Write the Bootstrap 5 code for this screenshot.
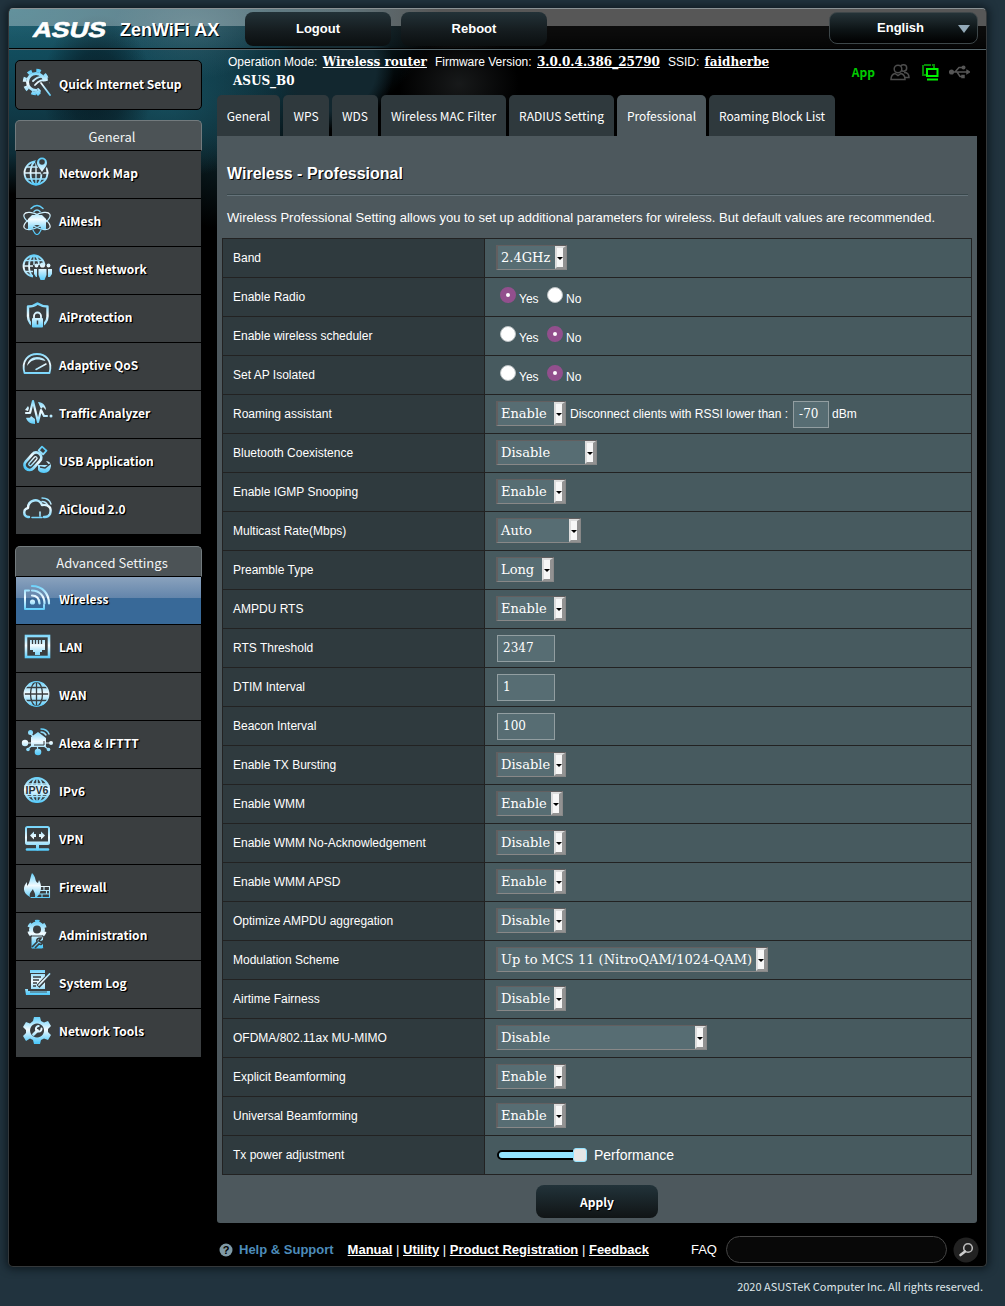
<!DOCTYPE html>
<html lang="en">
<head>
<meta charset="utf-8">
<meta name="viewport" content="width=device-width, initial-scale=1">
<title>ASUS Wireless Router ZenWiFi AX - Professional</title>
<link href="https://cdn.jsdelivr.net/npm/bootstrap@5.3.0/dist/css/bootstrap.min.css" rel="stylesheet">
<style>
:root{--cjk:"Noto Sans CJK SC","Noto Sans CJK JP",sans-serif;--arial:"Liberation Sans",Arial,sans-serif;--serif:"DejaVu Serif",serif}
body{background:#21333e;color:#fff;font-family:var(--arial);font-size:12px;line-height:16px;width:1005px;height:1306px;overflow:hidden}
a{color:#fff}
.shell{width:979px;height:1259px;margin:8px 0 0 8px;border:1px solid #34383a;border-top-color:#8a9294;border-radius:5px;box-shadow:0 0 8px 2px rgba(8,16,22,.75);overflow:hidden;
background:
radial-gradient(ellipse 55px 75px at 88px 80px,rgba(4,18,25,.75),rgba(4,18,25,.5) 50%,transparent 100%),
radial-gradient(ellipse 80px 50px at 185px 20px,rgba(50,95,108,.75),transparent),
radial-gradient(ellipse 110px 75px at 160px 95px,rgba(25,88,104,.65),transparent),
radial-gradient(circle 60px at 325px 60px,#12272f 0,#12272f 70%,transparent 100%),
radial-gradient(ellipse 60px 50px at 450px 75px,rgba(26,28,29,.9),transparent),
radial-gradient(ellipse 430px 185px at 0 0,#12596a 0,#114656 35%,#0e2d37 78%,transparent 100%),
radial-gradient(ellipse 90px 110px at 215px 110px,#102c34,transparent),#000}
.topbar{height:41px;border-bottom:1px solid #56656b;background:linear-gradient(rgba(255,255,255,.34) 17px,rgba(255,255,255,.05) 17px,rgba(255,255,255,.02));padding:3px 8px 0 23px;box-shadow:inset 0 -1px #000}
.model{font-size:18px;font-weight:700;line-height:36px;text-shadow:1px 1px #000;width:125px;margin-left:14px}
.topbtn{width:146px;height:34px;border-radius:8px;background:linear-gradient(#233238,#151c1f 55%,#0b0f10);font-weight:700;font-size:13px;line-height:33px;text-align:center}
.lang{width:149px;height:32px;line-height:30px;border:1px solid #3d4649;background:linear-gradient(#253338,#0d1416 55%,#000);position:relative;padding-right:6px}
.lang::after{content:"";position:absolute;right:7px;top:12px;border:6px solid transparent;border-top:8px solid #93a9b8;border-bottom:0}
.side{width:187px;margin-left:6px;padding-top:10px;font-family:var(--cjk)}
.quick{height:50px;border:1px solid #000;border-radius:5px;background:#3a3e40;padding:5px 5px 9px}
.grouphead{height:31px;margin-top:10px;border:1px solid #727a7d;border-bottom:1px solid #000;border-radius:5px 5px 0 0;background:#4c5356;font-size:13px;line-height:31px;text-align:center;padding-left:7px;color:#f1f4f5}
.entry{height:48px;margin:0 1px;border-bottom:1px solid #000;background:#3a3e40;padding:4px 5px 0}
.entry:last-child{border-bottom:0}
.entry.current{background:linear-gradient(#8aa2bd,#6385ab 21px,#386998 21px,#386998)}
.side svg{width:32px;height:32px;flex:none}
.cap{font-size:12px;font-weight:700;margin-left:6px;line-height:35px;text-shadow:1px 1px 1px #000,1px 1px #000;white-space:nowrap}
.g{fill:none;stroke:url(#ice);stroke-width:1.8;stroke-linecap:round;stroke-linejoin:round}
.f{fill:url(#ice)}
.d{fill:none;stroke:#3a3e40;stroke-width:1.5}
.dk{fill:#3a3e40}
.main{width:760px;margin-left:15px}
.info{height:45px;padding:3px 0 0 11px;line-height:19px}
.info a,.info b{font-family:var(--serif);font-weight:700;font-size:12px}
.info a{margin:0 8px 0 2px}
.tabs{gap:3px;height:41px;font-family:var(--cjk);font-size:12px;line-height:41px}
.tabs div{background:#2f393d;border-radius:5px 5px 0 0;text-align:center;white-space:nowrap}
.tabs .on{background:#4d585d}
.pane{height:1087px;background:#4d585d;border-radius:0 0 3px 3px;padding:28px 5px 0}
.ttl{font-size:16px;font-weight:700;line-height:20px;text-shadow:1px 1px #000;margin:0 5px}
.rule{height:2px;margin:10px 4px 0 5px;background:#39474b;border-bottom:1px solid #65737a}
.desc{font-size:13px;margin:13px 5px 12px;line-height:17px}
.cfg{width:750px;table-layout:fixed;border-collapse:collapse}
.cfg th,.cfg td{height:39px;border:1px solid #222;padding:0 0 0 10px;font-weight:400;vertical-align:middle}
.cfg th{width:262px;background:#2f3a3e}
.cfg td{background:#475a5f}
.pick{height:25px;border:1px solid #888;border-left:2px solid #625f60;border-top-color:#625f60;background:#576d73;font:13px/23px var(--serif);padding-left:3px;width:70px;position:relative;left:1px;top:-1px;white-space:nowrap}
.pick::before{content:"";width:11px;height:23px;position:absolute;right:0;top:0;box-sizing:border-box;background:#f7f7f7;border:2px solid #dedede;border-right:3px solid #929292;border-bottom-color:#929292}
.pick::after{content:"";position:absolute;right:3px;top:11px;border:3px solid transparent;border-top:3px solid #000;border-bottom:0}
.w71{width:71px}.w101{width:101px}.w85{width:85px}.w58{width:58px}.w67{width:67px}.w272{width:272px}.w211{width:211px}
.num{width:58px;height:27px;border:1px solid #929ea1;background:#576d73;font:12px/25px var(--serif);padding-left:5px;margin-left:2px}
.dot{width:16px;height:16px;border-radius:50%;background:#fff;border:1px solid #b9bfc1;margin-right:3px;margin-bottom:4px}
.dot.sel{border:6px solid #924f8d}
.yn{padding-left:5px}
.yn span{width:28px;padding-top:4px}
.track{width:90px;height:10px;border:2px solid #000;border-radius:5px;background:#93e3ff;position:relative;margin:0 7px 0 2px}
.track::after{content:"";position:absolute;right:-2px;top:-4px;width:14px;height:14px;border-radius:3px;background:#e6e6e6;border:1px solid #93e3ff}
.apply{width:122px;height:33px;margin:10px auto 0;border-radius:8px;background:linear-gradient(#22333a,#101415);font:700 12px/33px var(--cjk);text-align:center;text-shadow:1px 1px #000}
.foot{height:43px;margin-top:5px;font-size:13px;padding-left:2px;white-space:nowrap}
.foot a{font-weight:700}
.find{width:221px;height:27px;border:1px solid #454545;border-radius:14px;background:#080808;flex:none}
.copy{font:11px/18px var(--cjk);text-align:right;padding:10px 22px 0 0;color:#dfe6e9}
</style>
</head>
<body>
<svg width="0" height="0" class="position-absolute" aria-hidden="true"><defs>
<linearGradient id="ice" gradientUnits="userSpaceOnUse" x1="0" y1="3" x2="0" y2="30"><stop offset="0" stop-color="#58ccfa"/><stop offset=".5" stop-color="#f2fbff"/><stop offset="1" stop-color="#4dc8fa"/></linearGradient>
</defs></svg>
<div class="shell">
 <div class="topbar d-flex align-items-start">
  <svg width="74" height="34" viewBox="0 0 74 34"><text x="0" y="25.500" transform="translate(6 0) skewX(-14)" textLength="73" lengthAdjust="spacingAndGlyphs" font-family="Liberation Sans" font-weight="700" font-size="21.500" fill="#fff" stroke="#fff" stroke-width=".6">ASUS</text></svg>
  <div class="model">ZenWiFi AX</div>
  <div class="topbtn">Logout</div>
  <div class="topbtn" style="margin-left:10px">Reboot</div>
  <div class="topbtn lang ms-auto">English</div>
 </div>
 <div class="d-flex align-items-start">
  <nav class="side">
   <div class="quick d-flex align-items-center"><svg viewBox="0 0 32 32"><circle cx="15" cy="15" r="8.500" class="g" style="stroke-width:3"/><circle cx="15" cy="15" r="11.500" class="g" style="stroke-width:3.500;stroke-linecap:butt" stroke-dasharray="4.500 4.530"/><path d="M13 15l15-1v13l-9 3z" class="dk"/><path d="M12 14c5-5 10-5 14-2l-3 1M14 18c4-5 7-5 12-5M20 16l9 12M17 22l2 2" class="g"/><path d="M17 23l3 3-3 3-3-3z" class="f"/></svg><div class="cap">Quick Internet Setup</div></div>
   <div class="grouphead">General</div>
   <div class="entry d-flex"><svg viewBox="0 0 32 32"><circle cx="15" cy="18" r="11.500" class="g"/><ellipse cx="15" cy="18" rx="5.500" ry="11.500" class="g"/><path d="M15 7v22M4 18h23M6 12h18M6 24h18" class="g" style="stroke-width:1.400"/><path d="M21 20L14 7l3-6h9l2 7z" class="dk"/><path d="M21 17c-3-5-5-6-5-9.500a5 5 0 0 1 10 0C26 11 24 12 21 17z" class="f"/><circle cx="21" cy="7" r="2.800" class="dk"/></svg><div class="cap">Network Map</div></div>
   <div class="entry d-flex"><svg viewBox="0 0 32 32"><ellipse cx="16" cy="18" rx="14.500" ry="6" transform="rotate(28 16 18)" class="g" style="stroke-width:1.200"/><ellipse cx="16" cy="18" rx="14.500" ry="6" transform="rotate(-28 16 18)" class="g" style="stroke-width:1.200"/><path d="M12 27q4 9 8 0" class="g" style="stroke-width:1.200"/><path d="M7 26V16l4-4h10l4 4v10h-5a4 4 0 0 0-8 0z" class="f"/><path d="M10 5.500q6-6 12 0M13 8.500q3-3 6 0" class="g" style="stroke-width:1.400"/></svg><div class="cap">AiMesh</div></div>
   <div class="entry d-flex"><svg viewBox="0 0 32 32"><circle cx="13" cy="15" r="10.500" class="g"/><ellipse cx="13" cy="15" rx="5" ry="10.500" class="g"/><path d="M13 5v20M3 15h20M5 9.500h16M5 20.500h10" class="g" style="stroke-width:1.400"/><path d="M12 14h19v14H12z" class="dk"/><circle cx="21.500" cy="14" r="2.600" class="f"/><path d="M17.500 18h8v6l-2 5h-4l-2-5zM13 18h3v8h-1l-2-3zM27 18h4v5l-2 3h-2z" class="f"/><circle cx="15.500" cy="14.500" r="1.900" class="f"/><circle cx="27.500" cy="14.500" r="1.900" class="f"/></svg><div class="cap">Guest Network</div></div>
   <div class="entry d-flex"><svg viewBox="0 0 32 32"><path d="M16.500 4.500c3 2 6 3 10 3v10c0 5-4 9-10 12-6-3-9.500-7-9.500-12v-10c4 0 7-1 9.500-3z" class="g" style="stroke-width:2.400"/><path d="M10 18h13v13H10z" class="dk"/><path d="M13 19v-2a3.500 3.500 0 0 1 7 0v2" class="g"/><rect x="11" y="19" width="11" height="9.500" rx="1" class="f"/><path d="M16.500 21.500v4" class="d"/></svg><div class="cap">AiProtection</div></div>
   <div class="entry d-flex"><svg viewBox="0 0 32 32"><path d="M3.500 26C0 13 8 7 16 7s16 6 12.500 19z" class="g"/><path d="M6 19c1-6 5-9 10-9 4 0 7 1 8.500 4-9-3-14-2-18.500 5z" class="f"/><path d="M15 22.500l10-5.500" class="g" style="stroke-width:1.500"/></svg><div class="cap">Adaptive QoS</div></div>
   <div class="entry d-flex"><svg viewBox="0 0 32 32"><path d="M5 18h4l3-12 5 21 3-12 3 6h3" class="g" style="stroke-width:2.200"/><circle cx="30" cy="21" r="1.500" class="f"/><path d="M17 7c5 0 8 4 8 8l-3-3-2 2zM5 23c2-1 4 1 5-2l4 3v5c-5 0-8-3-9-6zM4 15l3-4 1 2-1 3z" class="f"/></svg><div class="cap">Traffic Analyzer</div></div>
   <div class="entry d-flex"><svg viewBox="0 0 32 32"><g transform="rotate(42 15 17)"><rect x="8.500" y="10" width="10" height="20" rx="5" class="g" style="stroke-width:2.800"/><rect x="12" y="14.500" width="3" height="11" rx="1.500" class="g" style="stroke-width:1.300"/><rect x="10.500" y="3" width="6" height="5" class="g"/></g><path d="M17 22h13c0 5-3 8-7 8-3 0-5-1-6-3z" class="f"/><path d="M25 18q5 0 5 6z" class="f"/><path d="M19 24l5 1 5-4" class="d"/></svg><div class="cap">USB Application</div></div>
   <div class="entry d-flex"><svg viewBox="0 0 32 32"><path d="M8 26H7c-5-1-5-8 0-9 0-8 11-11 14-3 7-1 10 3 8 9-1 2-3 3-5 3h-1" class="g" style="stroke-width:2.400"/><path d="M11 26.500h10M19 21v4" class="g" style="stroke-width:1.600"/><path d="M21 7q7 0 9 6M21 10.500q4 0 6 4" class="g" style="stroke-width:1.400"/></svg><div class="cap">AiCloud 2.0</div></div>
   <div class="grouphead" style="margin-top:11px">Advanced Settings</div>
   <div class="entry current d-flex"><svg viewBox="0 0 32 32"><path d="M8 9.500H4V28h19v-4" class="g" style="stroke-width:2"/><circle cx="11.500" cy="21" r="2.600" class="f"/><path d="M11 14.500q7 0 7.500 8M11 9.500c8 0 12.500 6 12.500 13M11 5c11 0 17 8 17 17.500" class="g" style="stroke-width:2.200"/></svg><div class="cap">Wireless</div></div>
   <div class="entry d-flex"><svg viewBox="0 0 32 32"><rect x="5" y="7" width="23" height="21" class="g" style="stroke-width:2.600;stroke-linejoin:miter"/><path d="M9 11h15v10h-3v2h-2v3h-5v-3h-2v-2H9z" class="f"/><path d="M11.500 10v5M14.500 10v5M17.500 10v5M20.500 10v5" class="d" style="stroke-width:1.300"/></svg><div class="cap">LAN</div></div>
   <div class="entry d-flex"><svg viewBox="0 0 32 32"><circle cx="15.500" cy="17" r="12.500" class="f"/><ellipse cx="15.500" cy="17" rx="6" ry="12" class="d" style="stroke-width:1.300"/><path d="M15.500 4v26M3 17h25M5 10.500h21M5 23.500h21" class="d" style="stroke-width:1.300"/><circle cx="15.500" cy="17" r="12.300" class="g" style="stroke-width:1.200"/></svg><div class="cap">WAN</div></div>
   <div class="entry d-flex"><svg viewBox="0 0 32 32"><path d="M9 8l7 8 11 8M3 18h26M16 16l-9 8M16.500 16v12" class="g" style="stroke-width:1.200"/><path d="M10 12l7-5 8 6v9H10z" class="f"/><path d="M13 20h10v-4" class="d" style="stroke-width:1"/><circle cx="9.500" cy="7.500" r="2.500" class="f"/><circle cx="4" cy="18" r="3.200" class="f"/><circle cx="30" cy="18" r="2" class="f"/><circle cx="17" cy="27" r="3.300" class="f"/><circle cx="7" cy="24.500" r="1.800" class="f"/><circle cx="27.500" cy="24.500" r="1.800" class="f"/><path d="M20 4q6 0 8 5M20 7q3 0 5 3" class="g" style="stroke-width:1.400"/></svg><div class="cap">Alexa &amp; IFTTT</div></div>
   <div class="entry d-flex"><svg viewBox="0 0 32 32"><circle cx="16" cy="17" r="12" class="g" style="stroke-width:2.200"/><ellipse cx="16" cy="17" rx="5.500" ry="12" class="g"/><path d="M16 5v24M6 11h20M6 23.500h20" class="g" style="stroke-width:1.500"/><rect x="3.500" y="12" width="25" height="10" class="f"/><text x="4.500" y="21" textLength="23" lengthAdjust="spacingAndGlyphs" font-family="Liberation Sans" font-weight="700" font-size="11" fill="#28333a">IPV6</text></svg><div class="cap">IPv6</div></div>
   <div class="entry d-flex"><svg viewBox="0 0 32 32"><rect x="5" y="6" width="23" height="17" rx="1.500" class="g" style="stroke-width:2"/><path d="M6 22h21M16.500 23v5" class="g" style="stroke-width:3"/><path d="M6 28.500h21" class="g" style="stroke-width:2.600"/><path d="M9 14.500l4-4v2.500h2v3h-2v2.500zM24 14.500l-4-4v2.500h-2v3h2v2.500z" class="f"/></svg><div class="cap">VPN</div></div>
   <div class="entry d-flex"><svg viewBox="0 0 32 32"><path d="M9 28c-8-4-7-11-3-15v4c3-3 3-8 5-13 5 5 2 8 6 10l1-3c3 5 3 12-2 17h-2c1-4-2-6-2-8-2 3-4 4-3 8z" class="f"/><path d="M19 17.500h9.500v11H10M18 21.500h10M18 25h10M23 17.500v4M21 25v3M25.500 21.500V25" class="g" style="stroke-width:1.100"/></svg><div class="cap">Firewall</div></div>
   <div class="entry d-flex"><svg viewBox="0 0 32 32"><circle cx="16" cy="12.500" r="6" class="g" style="stroke-width:4"/><circle cx="16" cy="12.500" r="8.300" class="g" style="stroke-width:3;stroke-linecap:butt" stroke-dasharray="4.300 4.390" stroke-dashoffset="-2.200"/><rect x="10" y="19" width="12.500" height="13" rx="1.500" class="f" style="stroke:#3a3e40"/><path d="M11 30l5-5c-1-3 1-4 4-4l-2 3 2 1 2-1c0 3-2 4-4 3l-4 4" class="d" style="stroke-width:1.700"/></svg><div class="cap">Administration</div></div>
   <div class="entry d-flex"><svg viewBox="0 0 32 32"><path d="M9 5h15v3H9zM10 9h14v15H10zM4 24h3v2h22v4H5z" class="f"/><path d="M12 12h8M12 15h6M12 18h4M12 21h3" class="d"/><path d="M29 9L17 21.500" stroke="#3a3e40" stroke-width="4"/><path d="M28.500 9L18 20" class="g" style="stroke-width:1.800"/><path d="M9 27h17" class="d" style="stroke-width:.8"/></svg><div class="cap">System Log</div></div>
   <div class="entry d-flex"><svg viewBox="0 0 32 32"><path fill-rule="evenodd" class="f" d="M13 4h6l1 4 3 1.500 4-1.500 3 5-3 3v3l3 3-3 5-4-1.500-3 1.500-1 4h-6l-1-4-3-1.500L5 28l-3-5 3-3v-3l-3-3 3-5 4 1.500L12 8zM16 10.500a7 7 0 1 0 .1 0z"/><path d="M12.500 21.500l4-4" class="g" style="stroke-width:2.800"/><path d="M20.500 15.500a2.800 2.800 0 1 1-2.800-2.500" class="g" style="stroke-width:2"/></svg><div class="cap">Network Tools</div></div>
  </nav>
  <main class="main">
   <div class="info d-flex justify-content-between">
    <div>Operation Mode: <a href="#">Wireless router</a>Firmware Version: <a href="#">3.0.0.4.386_25790</a>SSID: <a href="#">faidherbe</a><br><b style="margin-left:5px">ASUS_B0</b></div>
    <div class="d-flex align-items-center" style="height:37px;padding-right:7px">
     <span style="font:700 12px/18px var(--cjk);color:#00cc00;margin-right:15px">App</span>
     <svg width="20" height="18" viewBox="0 0 20 18" fill="none" stroke="#4c4c4c" stroke-width="1.500" style="margin-right:11px"><circle cx="13.500" cy="5" r="3.200"/><path d="M14 9.500c3 0 5 2 5 5h-4"/><circle cx="8" cy="6" r="3.800" fill="#000"/><path d="M1 16.500c0-4 2-5.500 4-6l3 2 3-2c2 .5 4 2 4 6z" fill="#000"/></svg>
     <svg width="18" height="18" viewBox="0 0 18 18" fill="none" style="margin-right:10px"><path d="M2 9V2h11v3M2 9v3h3" stroke="#078a07" stroke-width="2" stroke-dasharray="7 1"/><rect x="6" y="6" width="10.500" height="7" stroke="#00f400" stroke-width="2"/><path d="M6 16.500h11" stroke="#00f400" stroke-width="2"/></svg>
     <svg width="21" height="14" viewBox="0 0 21 14" fill="none" stroke="#565656" stroke-width="1.500"><path d="M3 7h16M6 7l4-4.500h4M8 7l3 4.500h3"/><circle cx="2.500" cy="7" r="1.800" fill="#565656"/><circle cx="14.500" cy="2.500" r="1.300" fill="#565656"/><path d="M13 10.500h2v2h-2zM18 5.500l2.500 1.500-2.500 1.500z" fill="#565656"/></svg>
    </div>
   </div>
   <div class="tabs d-flex">
    <div style="width:63px">General</div><div style="width:46px">WPS</div><div style="width:46px">WDS</div><div style="width:125px">Wireless MAC Filter</div><div style="width:105px">RADIUS Setting</div><div class="on" style="width:89px">Professional</div><div style="width:126px">Roaming Block List</div>
   </div>
   <section class="pane">
    <div class="ttl">Wireless - Professional</div>
    <div class="rule"></div>
    <div class="desc">Wireless Professional Setting allows you to set up additional parameters for wireless. But default values are recommended.</div>
    <table class="cfg">
     <tr><th>Band</th><td><div class="pick w71">2.4GHz</div></td></tr>
     <tr><th>Enable Radio</th><td><div class="yn d-flex align-items-center"><i class="dot sel"></i><span>Yes</span><i class="dot"></i><span>No</span></div></td></tr>
     <tr><th>Enable wireless scheduler</th><td><div class="yn d-flex align-items-center"><i class="dot"></i><span>Yes</span><i class="dot sel"></i><span>No</span></div></td></tr>
     <tr><th>Set AP Isolated</th><td><div class="yn d-flex align-items-center"><i class="dot"></i><span>Yes</span><i class="dot sel"></i><span>No</span></div></td></tr>
     <tr><th>Roaming assistant</th><td><div class="d-flex align-items-center"><div class="pick">Enable</div><span style="margin-left:5px">Disconnect clients with RSSI lower than :</span><div class="num" style="width:36px;margin:0 3px 0 5px">-70</div>dBm</div></td></tr>
     <tr><th>Bluetooth Coexistence</th><td><div class="pick w101">Disable</div></td></tr>
     <tr><th>Enable IGMP Snooping</th><td><div class="pick">Enable</div></td></tr>
     <tr><th>Multicast Rate(Mbps)</th><td><div class="pick w85">Auto</div></td></tr>
     <tr><th>Preamble Type</th><td><div class="pick w58">Long</div></td></tr>
     <tr><th>AMPDU RTS</th><td><div class="pick">Enable</div></td></tr>
     <tr><th>RTS Threshold</th><td><div class="num">2347</div></td></tr>
     <tr><th>DTIM Interval</th><td><div class="num">1</div></td></tr>
     <tr><th>Beacon Interval</th><td><div class="num">100</div></td></tr>
     <tr><th>Enable TX Bursting</th><td><div class="pick">Disable</div></td></tr>
     <tr><th>Enable WMM</th><td><div class="pick w67">Enable</div></td></tr>
     <tr><th>Enable WMM No-Acknowledgement</th><td><div class="pick">Disable</div></td></tr>
     <tr><th>Enable WMM APSD</th><td><div class="pick">Enable</div></td></tr>
     <tr><th>Optimize AMPDU aggregation</th><td><div class="pick">Disable</div></td></tr>
     <tr><th>Modulation Scheme</th><td><div class="pick w272">Up to MCS 11 (NitroQAM/1024-QAM)</div></td></tr>
     <tr><th>Airtime Fairness</th><td><div class="pick">Disable</div></td></tr>
     <tr><th>OFDMA/802.11ax MU-MIMO</th><td><div class="pick w211">Disable</div></td></tr>
     <tr><th>Explicit Beamforming</th><td><div class="pick">Enable</div></td></tr>
     <tr><th>Universal Beamforming</th><td><div class="pick">Enable</div></td></tr>
     <tr><th>Tx power adjustment</th><td><div class="d-flex align-items-center"><div class="track"></div><span style="font-size:14px">Performance</span></div></td></tr>
    </table>
    <div class="apply">Apply</div>
   </section>
   <div class="foot d-flex align-items-center">
    <svg width="14" height="14" viewBox="0 0 14 14" class="flex-shrink-0"><circle cx="7" cy="7" r="6.500" fill="#7f9aa6"/><text x="7" y="11" text-anchor="middle" font-family="Liberation Sans" font-weight="700" font-size="11" fill="#000">?</text></svg>
    <b style="color:#4d8cba;margin:0 14px 0 6px">Help &amp; Support</b>
    <div><a href="#">Manual</a> | <a href="#">Utility</a> | <a href="#">Product Registration</a> | <a href="#">Feedback</a></div>
    <span style="margin:0 9px 0 42px">FAQ</span><div class="find"></div>
    <svg width="26" height="26" viewBox="0 0 26 26" class="flex-shrink-0" style="margin-left:6px"><circle cx="13" cy="13" r="12.500" fill="#222"/><circle cx="15" cy="11" r="4.300" fill="none" stroke="#bbb" stroke-width="1.600"/><path d="M12 14.500L7.500 18" stroke="#ccc" stroke-width="2.600" stroke-linecap="round"/></svg>
   </div>
  </main>
 </div>
</div>
<div class="copy">2020 ASUSTeK Computer Inc. All rights reserved.</div>
<script src="https://cdn.jsdelivr.net/npm/bootstrap@5.3.0/dist/js/bootstrap.bundle.min.js"></script>
</body>
</html>
